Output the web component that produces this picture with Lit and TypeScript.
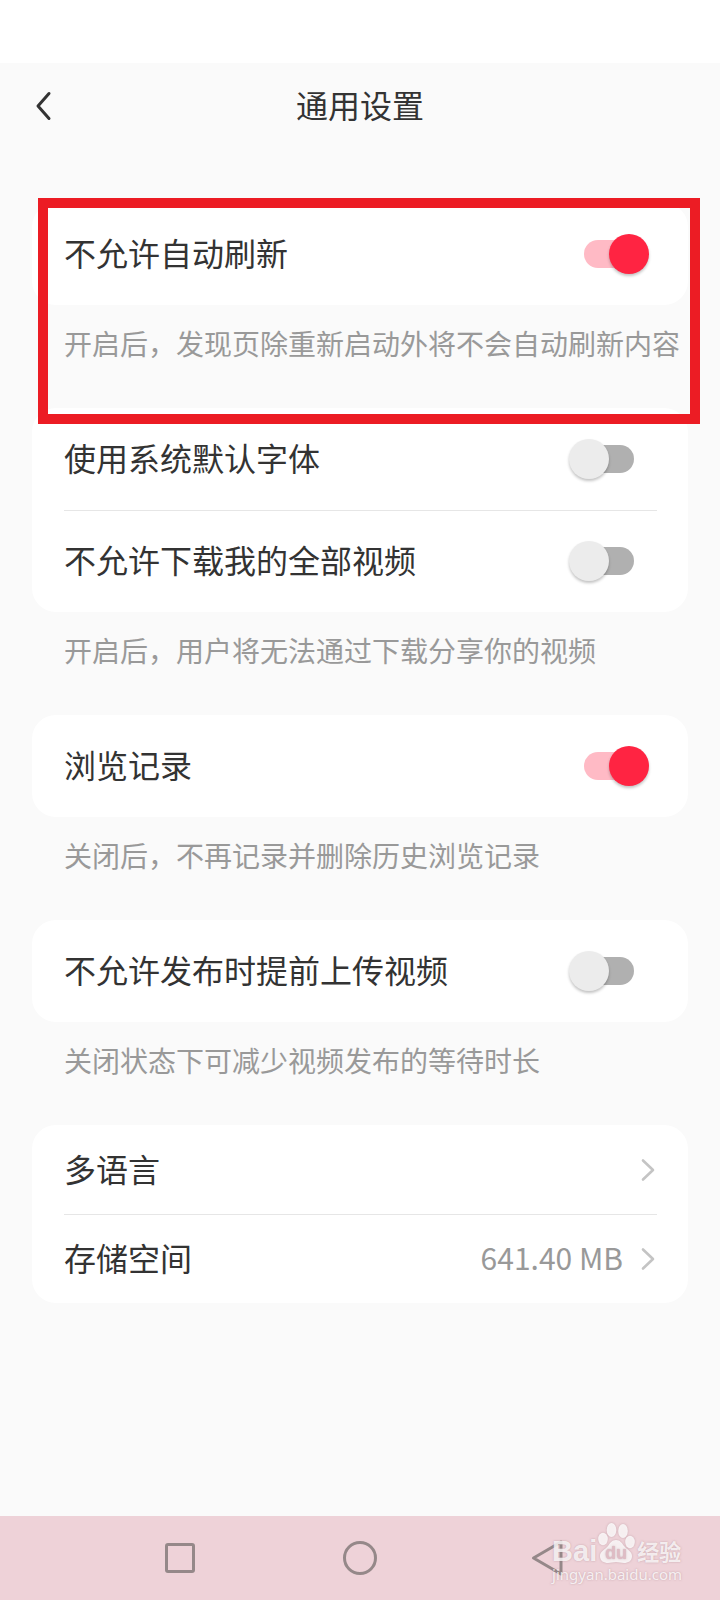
import { LitElement, html, css, svg, nothing } from "lit";
import { customElement, property } from "lit/decorators.js";

interface Item {
  id: string;
  label: string;
  kind: "switch" | "link";
  on?: boolean;
  value?: string;
}

interface Group {
  items: Item[];
  note?: string;
  highlighted?: boolean;
}

const GROUPS: Group[] = [
  {
    items: [{ id: "refresh", label: "不允许自动刷新", kind: "switch", on: true }],
    note: "开启后，发现页除重新启动外将不会自动刷新内容",
    highlighted: true,
  },
  {
    items: [
      { id: "font", label: "使用系统默认字体", kind: "switch" },
      { id: "download", label: "不允许下载我的全部视频", kind: "switch" },
    ],
    note: "开启后，用户将无法通过下载分享你的视频",
  },
  {
    items: [{ id: "history", label: "浏览记录", kind: "switch", on: true }],
    note: "关闭后，不再记录并删除历史浏览记录",
  },
  {
    items: [{ id: "upload", label: "不允许发布时提前上传视频", kind: "switch" }],
    note: "关闭状态下可减少视频发布的等待时长",
  },
  {
    items: [
      { id: "language", label: "多语言", kind: "link" },
      { id: "storage", label: "存储空间", kind: "link", value: "641.40 MB" },
    ],
  },
];

@customElement("setting-row")
class SettingRow extends LitElement {
  @property({ attribute: false }) item!: Item;

  static styles = css`
    :host {
      display: block;
    }
    .row {
      display: flex;
      align-items: center;
      box-sizing: border-box;
      color: #333;
      font-size: 32px;
      line-height: 40px;
      text-decoration: none;
    }
    .switch-row {
      min-height: 102px;
      padding-right: 8px;
    }
    .link-row {
      min-height: 89px;
    }
    .label,
    .value {
      padding-bottom: 4px;
    }
    .label {
      flex: 1;
    }
    .value {
      color: #999;
      font-size: 30px;
      margin-right: 16px;
    }
    .arrow {
      display: block;
      width: 18px;
      height: 26px;
    }
    .switch {
      appearance: none;
      display: grid;
      align-items: center;
      width: 80px;
      height: 40px;
      margin: 0;
    }
    .switch::before,
    .switch::after {
      content: "";
      grid-area: 1 / 1;
    }
    .switch::before {
      width: 50px;
      height: 28px;
      justify-self: center;
      border-radius: 14px;
      background: #b0b0b0;
    }
    .switch::after {
      width: 40px;
      height: 40px;
      justify-self: start;
      border-radius: 50%;
      background: #ececec;
      box-shadow: 0 2px 3px rgba(0, 0, 0, 0.24);
    }
    .switch:checked::before {
      background: #ffbac5;
    }
    .switch:checked::after {
      justify-self: end;
      background: #ff2442;
    }
  `;

  render() {
    const { id, label, kind, on, value } = this.item;
    if (kind === "switch") {
      return html`<div class="row switch-row">
        <label class="label" for=${id}>${label}</label>
        <input class="switch" type="checkbox" role="switch" id=${id} ?checked=${on} />
      </div>`;
    }
    return html`<a class="row link-row" href="#${id}">
      <span class="label">${label}</span>
      ${value ? html`<span class="value">${value}</span>` : nothing}
      <svg class="arrow" viewBox="0 0 18 26" fill="none" stroke="#c4c4c4" stroke-width="2.6"
        stroke-linecap="round" stroke-linejoin="round" aria-hidden="true">
        <path d="M4 3.500 14 13 4 22.500" />
      </svg>
    </a>`;
  }
}

@customElement("site-mark")
class SiteMark extends LitElement {
  static styles = css`
    :host {
      display: block;
      color: rgba(255, 255, 255, 0.8);
      text-shadow: 0 0 2px rgba(150, 110, 120, 0.5);
    }
    .brand {
      display: flex;
      align-items: flex-end;
      font: 700 29px/26px "Liberation Sans", sans-serif;
    }
    .cn {
      font: 700 22px/28px "Noto Sans CJK SC", sans-serif;
      margin-left: 2px;
    }
    .paw {
      display: block;
      width: 38px;
      height: 42px;
      filter: drop-shadow(0 0 1px rgba(150, 110, 120, 0.5));
    }
    .paw-text {
      font: 700 18px "Liberation Sans", sans-serif;
    }
    .url {
      font: 15px/20px "Noto Sans", sans-serif;
    }
  `;

  render() {
    return html`
      <div class="brand">
        <span>Bai</span>
        <svg class="paw" viewBox="0 0 38 42" fill="#fff" fill-opacity=".82" role="img" aria-label="du">
          ${svg`
            <ellipse cx="6" cy="17" rx="4.800" ry="6.200" />
            <ellipse cx="14.500" cy="8" rx="4.800" ry="7" />
            <ellipse cx="26" cy="9" rx="4.800" ry="7" />
            <ellipse cx="33" cy="20" rx="4.800" ry="6.200" />
            <path d="M19 18c-4 0-6 3-8 6-3 4-8 5-8 10 0 5 4 7 8 7 3 0 5-1 8-1s5 1 8 1c4 0 8-2 8-7 0-5-5-6-8-10-2-3-4-6-8-6Z" />
          `}
          <text class="paw-text" x="19" y="37" text-anchor="middle" fill="#dfbcc4" fill-opacity="1">du</text>
        </svg>
        <span class="cn">经验</span>
      </div>
      <div class="url">jingyan.baidu.com</div>
    `;
  }
}

@customElement("app-root")
class AppRoot extends LitElement {
  static styles = css`
    :host {
      display: flex;
      flex-direction: column;
      min-height: 100vh;
      background: #fafafa;
      color: #333;
      font-family: "Noto Sans CJK SC", sans-serif;
    }
    button {
      display: grid;
      place-items: center;
      padding: 0;
      border: 0;
      background: none;
    }
    .status {
      height: 63px;
      background: #fff;
    }
    .header {
      display: grid;
      grid-template-columns: 64px 1fr 64px;
      align-items: center;
      height: 86px;
      padding: 0 12px;
    }
    .title {
      margin: 0;
      padding-bottom: 4px;
      font-size: 32px;
      line-height: 40px;
      font-weight: 400;
      text-align: center;
    }
    .back {
      width: 64px;
      height: 64px;
    }
    .groups {
      flex: 1;
      padding: 54px 32px 0;
    }
    .group {
      position: relative;
    }
    .highlight {
      position: absolute;
      inset: -5px -12px -16px 6px;
      border: 10px solid #ec1c24;
      pointer-events: none;
      z-index: 1;
    }
    .card {
      padding: 0 31px 0 32px;
      border-radius: 24px;
      background: #fff;
    }
    .item + .item {
      box-shadow: inset 0 1px #e6e6e6;
    }
    .note {
      margin: 0;
      padding: 20px 0 47px 32px;
      color: #999;
      font-size: 28px;
      line-height: 36px;
      white-space: nowrap;
    }
    .nav {
      position: relative;
      display: grid;
      grid-template-columns: repeat(3, 180px);
      justify-content: center;
      align-items: center;
      height: 84px;
      background: #eed2d8;
    }
    .mark {
      position: absolute;
      right: 38px;
      bottom: 16px;
    }
  `;

  render() {
    return html`
      <div class="status"></div>
      <header class="header">
        <button class="back" aria-label="返回">
          <svg width="28" height="32" viewBox="0 0 28 32" fill="none" stroke="#333" stroke-width="3"
            stroke-linecap="round" stroke-linejoin="round" aria-hidden="true">
            <path d="M19 3.500 8 16 19 28.500" />
          </svg>
        </button>
        <h1 class="title">通用设置</h1>
      </header>
      <main class="groups">
        ${GROUPS.map(
          (group) => html`<section class="group">
            <div class="card">
              ${group.items.map((item) => html`<setting-row class="item" .item=${item}></setting-row>`)}
            </div>
            ${group.note ? html`<p class="note">${group.note}</p>` : nothing}
            ${group.highlighted ? html`<div class="highlight"></div>` : nothing}
          </section>`,
        )}
      </main>
      <nav class="nav">
        <button aria-label="最近任务">
          <svg width="40" height="40" viewBox="0 0 40 40" fill="none" stroke="#958889" stroke-width="3" aria-hidden="true">
            <rect x="6.5" y="6.5" width="27" height="27" rx="1.5" />
          </svg>
        </button>
        <button aria-label="主页">
          <svg width="40" height="40" viewBox="0 0 40 40" fill="none" stroke="#958889" stroke-width="3" aria-hidden="true">
            <circle cx="20" cy="20" r="15.5" />
          </svg>
        </button>
        <button aria-label="返回">
          <svg width="48" height="40" viewBox="0 0 48 40" fill="none" stroke="#958889" stroke-width="3"
            stroke-linejoin="round" aria-hidden="true">
            <path d="M17.5 20 45 4V36Z" />
          </svg>
        </button>
        <site-mark class="mark"></site-mark>
      </nav>
    `;
  }
}
